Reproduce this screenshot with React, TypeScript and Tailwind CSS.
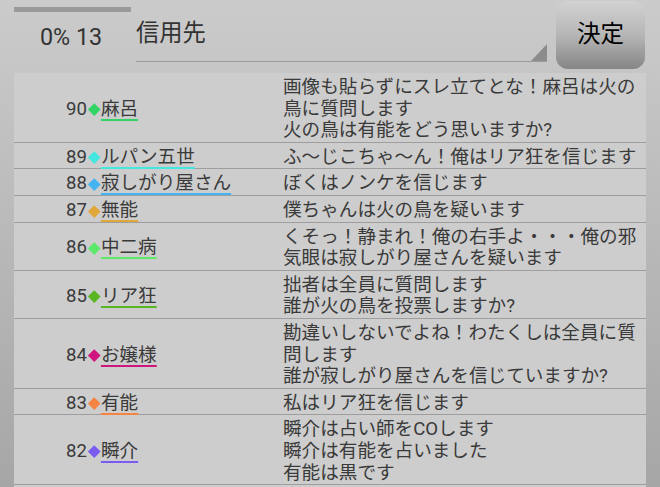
import React from "react";

type Row = {
  no: number;
  name: string;
  color: string;
  msg: string;
};

const rows: Row[] = [
  {
    no: 90,
    name: "麻呂",
    color: "#33d466",
    msg: "画像も貼らずにスレ立てとな！麻呂は火の鳥に質問します\n火の鳥は有能をどう思いますか?",
  },
  { no: 89, name: "ルパン五世", color: "#44e6e0", msg: "ふ〜じこちゃ〜ん！俺はリア狂を信じます" },
  { no: 88, name: "寂しがり屋さん", color: "#44b4f0", msg: "ぼくはノンケを信じます" },
  { no: 87, name: "無能", color: "#e0a83a", msg: "僕ちゃんは火の鳥を疑います" },
  {
    no: 86,
    name: "中二病",
    color: "#5de86a",
    msg: "くそっ！静まれ！俺の右手よ・・・俺の邪気眼は寂しがり屋さんを疑います",
  },
  {
    no: 85,
    name: "リア狂",
    color: "#5ab522",
    msg: "拙者は全員に質問します\n誰が火の鳥を投票しますか?",
  },
  {
    no: 84,
    name: "お嬢様",
    color: "#d0157f",
    msg: "勘違いしないでよね！わたくしは全員に質問します\n誰が寂しがり屋さんを信じていますか?",
  },
  { no: 83, name: "有能", color: "#f58442", msg: "私はリア狂を信じます" },
  {
    no: 82,
    name: "瞬介",
    color: "#7a5cf0",
    msg: "瞬介は占い師をCOします\n瞬介は有能を占いました\n有能は黒です",
  },
];

function LogRow({ row }: { row: Row }) {
  return (
    <div className="flex border-b border-[#9e9e9e] pt-[4px]">
      <div className="flex w-[269px] items-center pl-[52px]">
        <div className="flex items-center leading-[21.6px]">
          <span>{row.no}</span>
          <span className="ml-[1px] flex w-[12px] items-center justify-center">
            <span
              className="block h-[8.5px] w-[8.5px] rotate-45"
              style={{ backgroundColor: row.color }}
            />
          </span>
          <span
            className="ml-[1px] underline decoration-2 underline-offset-[4px]"
            style={{ textDecorationColor: row.color }}
          >
            {row.name}
          </span>
        </div>
      </div>
      <div className="flex-1 whitespace-pre-line leading-[21.6px]">{row.msg}</div>
    </div>
  );
}

export default function App() {
  return (
    <div className="flex h-[487px] w-[660px] flex-col overflow-hidden bg-linear-to-b from-[#cbcbcb] to-[#a6a6a6] font-['Roboto','Noto_Sans_CJK_JP',sans-serif] text-[#3a3a3a]">
      {/* ヘッダー */}
      <div className="flex h-[73px] shrink-0 pl-[14px] pr-[15px]">
        <div className="w-[122px]">
          <div className="mt-[7px] h-[4.5px] w-[117px] bg-[#9a9a9a]" />
          <div className="mt-[11px] pl-[26px] text-[23.3px] leading-[28px] text-[#333]">0% 13</div>
        </div>
        <div className="flex h-[62px] w-[411px] justify-between border-b-[1.5px] border-[#9a9a9a]">
          <div className="self-start pt-[19px] text-[23.3px] leading-[28px] text-[#333]">信用先</div>
          <svg width="16" height="17" viewBox="0 0 16 17" className="self-end">
            <polygon points="16,0 16,17 0,17" fill="#8c8c8c" />
          </svg>
        </div>
        <button className="ml-[9px] mt-[1px] flex h-[68px] w-[89px] items-center justify-center rounded-[12px] bg-linear-to-b from-[#d2d2d2] via-[#b6b6b6] to-[#868686] text-[23.5px] text-black">
          決定
        </button>
      </div>

      {/* ログ一覧 */}
      <div className="mx-[14px] flex-1 bg-[#cdcdcd] text-[18.6px]">
        {rows.map((r) => (
          <LogRow key={r.no} row={r} />
        ))}
      </div>
    </div>
  );
}
